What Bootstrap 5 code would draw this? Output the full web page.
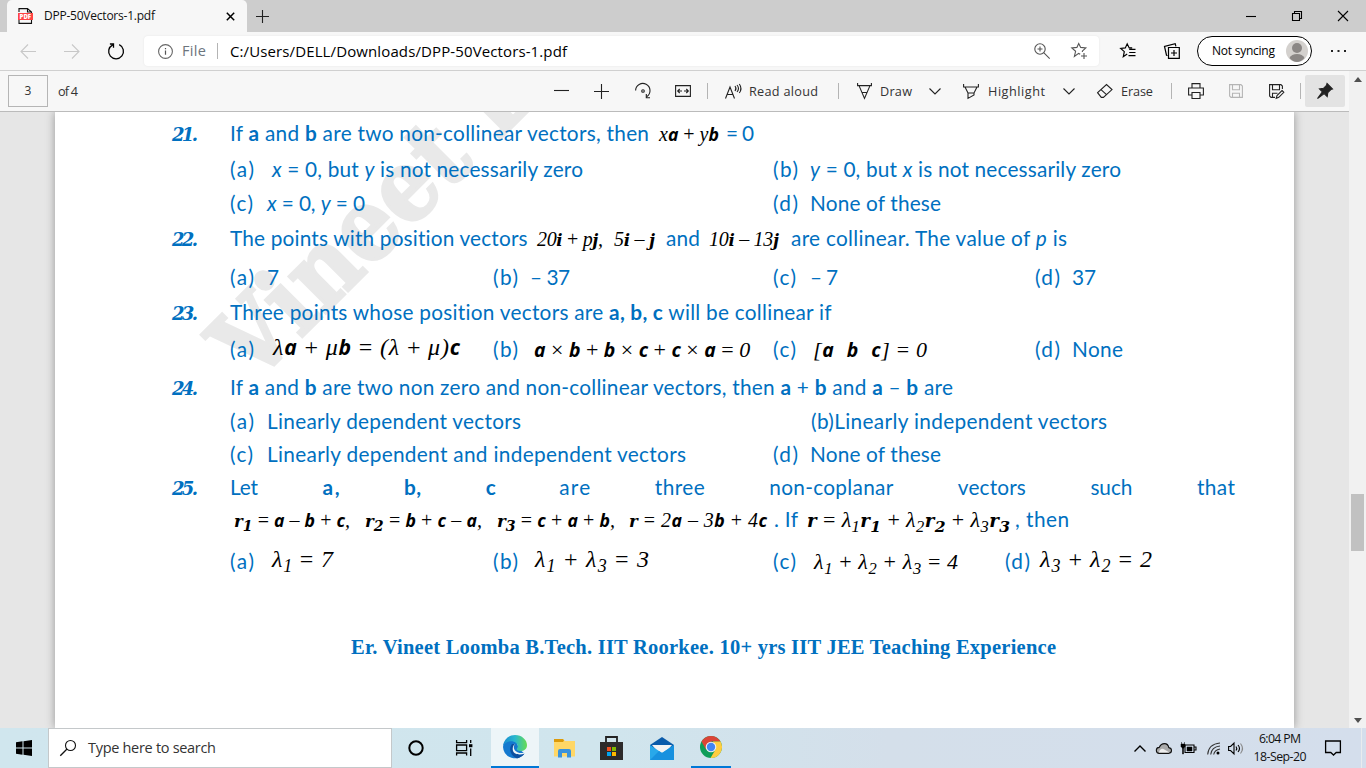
<!DOCTYPE html>
<html lang="en">
<head>
<meta charset="utf-8">
<title>DPP-50Vectors-1.pdf</title>
<meta name="viewport" content="width=device-width, initial-scale=1">
<link href="https://cdn.jsdelivr.net/npm/bootstrap@5.3.0/dist/css/bootstrap.min.css" rel="stylesheet">
<style>
html,body{height:768px;overflow:hidden}
body{font-family:"Open Sans","Noto Sans",sans-serif;font-size:12px;line-height:1;color:#111;background:#e6e6e6}
svg{display:block;flex:none;fill:none;stroke:#222;stroke-width:1.1;overflow:visible}
.cell{display:flex;align-items:center;justify-content:center;min-width:0}
.fit{display:inline-block;white-space:nowrap;flex:none}
.tabs-bar{height:32px;background:#cdcdcd;display:grid;grid-template-columns:7px 240px 31px 1fr 46px 46px 46px}
.doc-tab{background:#f7f7f7;border-radius:5px 5px 0 0;padding:0 8px 0 11px}
.addr-bar{height:39px;background:#f7f7f7;border-bottom:1px solid #d0d0d0;display:grid;grid-template-columns:6px 44px 44px 44px 6px 955px 7px 44px 44px 3px 115px 52px;align-items:center}
.addr-box{height:30px;background:#fff;border-radius:4px;box-shadow:0 0 2px #e3e3e3;font-size:15px;padding:0 11px 0 14px}
.file-tag{font-size:14.5px}
.star{margin-left:21px}
.sync-pill{height:30px;border:1.5px solid #000;border-radius:15px;padding:0 3px 0 14px}
.main-view{height:657px}
.pdf-bar{height:41px;background:#f7f7f7;border-bottom:1px solid #bbb;display:grid;grid-template-columns:8px 40px 10px 483px 40px 41px 41px 39px 11px 12px 107px 12px 13px 66px 24px 16px 94px 24px 16px 68px 12px 38px 42px 38px 10px 40px;align-items:center;color:#333}
.pdf-bar .fit{font-size:12.7px}
.page-no{height:32px;border:1px solid #b5b5b5}
.rule-v{width:1px;height:16px;background:#b4b4b4;justify-self:center}
.pin-btn{height:32px;background:#e3e3e3;border-radius:2px}
.scroll-col{width:17px;background:#f1f1f1;padding:6px 0 5px}
.thumb{width:13px;height:57px;background:#c1c1c1;margin-top:412px}
.pdf-view{height:616px;padding-left:55px;background:#e6e6e6}
.sheet{width:1239px;height:616px;background:#fff;box-shadow:0 0 9px rgba(0,0,0,.35);padding-top:3px;color:#0070c0;font:20.8px Lato,sans-serif;line-height:1;position:relative}
.watermark{position:absolute;left:0;top:0}
.line-row{display:flex;align-items:center;position:relative;padding-left:117px}
.qnum{width:58px;font:italic bold 18px "DejaVu Serif",serif;flex:none;transform:translateY(1px)}
.opts{display:grid;grid-template-columns:263px 280px 262px 1fr;padding-left:175px}
.opts>div{display:flex;align-items:center}
.lab{width:37px;flex:none}
.spread{width:1005px}
.h28{height:28px}.h30{height:30px}.h32{height:32px}.h36{height:36px}.h38{height:38px}.h40{height:40px}.h44{height:44px}.h56{height:56px}
.eq{color:#000;font-family:"Liberation Serif",serif;font-style:italic;font-size:20px;transform:translateY(1px)}
.eq.m{font-size:22px}
.eq.l{font-size:24px}
.eq b{font-family:"Open Sans",sans-serif;font-weight:700;font-size:.88em}
.eq b.s{font-family:"DejaVu Serif",serif;font-size:.83em}
.eq u{font-style:normal;text-decoration:none}
.eq sub{font-size:.75em;bottom:-.3em;line-height:0}
.eq b sub{font-size:.85em}
.eq.up{transform:translateY(-2px)}
.footer-line{height:56px;margin-top:30px;padding-left:296px;font:bold 20.5px "Liberation Serif",serif}
.task-bar{height:40px;background:linear-gradient(90deg,#d0e6ee 0,#d0e5ed 45%,#d4dfea 65%,#d4deec);display:grid;grid-template-columns:48px 344px 48px 48px 54px 44px 50px 51px 47px 1fr 24px 24px 24px 27px 18px 70px 36px 10px 5px}
.search-box{background:#fff;border:1px solid #c4c8ca;font-size:14.5px;color:#333;justify-content:flex-start;padding-left:11px}
.active-app{background:#edf5f8;border-bottom:2px solid #0078d7;width:48px;justify-self:center}
.open-app{border-bottom:2px solid #0078d7;width:40px;justify-self:center}
.clock-cell{font-size:12.3px;flex-direction:column;gap:6px;color:#111}
</style>
</head>
<body>
<header class="tabs-bar">
  <span></span>
  <div class="doc-tab d-flex align-items-center">
    <svg width="15" height="16" viewBox="0 0 15 16"><path d="M1 4V.6h8.5L13.5 4v11.4H1V12M9.5.6V4h4" stroke="#111"/><rect x="0" y="5" width="15" height="7" fill="#f44" stroke="none"/><text x="1.6" y="10.8" font-size="6" font-weight="800" fill="#fff" stroke="none">PDF</text></svg>
    <span class="fit" data-gap="11" data-w="111">DPP-50Vectors-1.pdf</span>
    <svg class="ms-auto me-1" width="9" height="9" viewBox="0 0 9 9"><path d="M.8.8l7.4 7.4M8.2.8L.8 8.2" stroke="#000" stroke-width="1.5"/></svg>
  </div>
  <div class="cell"><svg width="13" height="13" viewBox="0 0 13 13"><path d="M6.5 0v13M0 6.5h13"/></svg></div>
  <span></span>
  <div class="cell"><svg width="10" height="10" viewBox="0 0 10 10"><path d="M0 5.5h10" stroke="#000"/></svg></div>
  <div class="cell"><svg width="10" height="10" viewBox="0 0 10 10"><path d="M.5 2.5h7v7h-7zM2.5 2.5v-2h7v7h-2" stroke="#000"/></svg></div>
  <div class="cell"><svg width="10" height="10" viewBox="0 0 10 10"><path d="M0 0l10 10M10 0L0 10" stroke="#000"/></svg></div>
</header>
<nav class="addr-bar">
  <span></span>
  <div class="cell"><svg width="16" height="15" viewBox="0 0 16 15"><path d="M16 7.5H.8M8 .5l-7 7 7 7" stroke="#c8c8c8"/></svg></div>
  <div class="cell"><svg width="16" height="15" viewBox="0 0 16 15"><path d="M0 7.5h15.2M8 .5l7 7-7 7" stroke="#c8c8c8"/></svg></div>
  <div class="cell"><svg width="16" height="17" viewBox="0 0 16 17"><path d="M11.2 1.7A7.4 7.4 0 1 1 4.7 1.8M1.9 1h3.6v3.8" stroke="#000" stroke-width="1.3"/></svg></div>
  <span></span>
  <div class="addr-box d-flex align-items-center">
    <svg width="15" height="15" viewBox="0 0 15 15"><circle cx="7.5" cy="7.5" r="6.9" stroke="#666"/><path d="M7.5 6.5v4.3M7.5 4v1.3" stroke="#555" stroke-width="1.2"/></svg>
    <span class="fit file-tag text-secondary" data-gap="9" data-w="24">File</span>
    <span class="fit rule-v" data-gap="11" data-w="1"></span>
    <span class="fit text-black" data-gap="12" data-w="337">C:/Users/DELL/Downloads/DPP-50Vectors-1.pdf</span>
    <svg class="ms-auto" width="16" height="16" viewBox="0 0 16 16"><circle cx="6" cy="6" r="5.2" stroke="#555"/><path d="M9.7 9.7l6 6M6 3.5v5M3.5 6h5" stroke="#555"/></svg>
    <svg class="star" width="17" height="16" viewBox="0 0 17 16"><path d="M9.2 11.3L7.6 10.4l-4.2 3 1.2-5.1L.8 4.9l5.1-.5L7.7.5l2 3.9 5.1.5-3.5 3.2.2.9M13 10v6M10 13h6" stroke="#555"/></svg>
  </div>
  <span></span>
  <div class="cell"><svg width="16" height="16" viewBox="0 0 16 16"><path d="M7.2 11l-3.9 2.7 1-5.1L.7 5.4l4.6-.5L7.2.8l2 4.1h3M9.2 6.300h6.300M9.200 9.500h6.300M8.500 12.700h7" stroke="#000" stroke-width="1.2"/></svg></div>
  <div class="cell"><svg width="16" height="16" viewBox="0 0 16 16"><path d="M4.5 4.5h10.8v10.8H4.5zM10 7v6M7 10h6M3.5 12.5l-1-.3L.5 3.5 11.2.7l.7 2.6" stroke="#000" stroke-width="1.2"/></svg></div>
  <span></span>
  <div class="sync-pill d-flex align-items-center justify-content-between bg-white">
    <span class="fit text-black" data-w="63">Not syncing</span>
    <svg width="22" height="22" viewBox="0 0 22 22"><circle cx="11" cy="11" r="11" fill="#d4d1ce" stroke="none"/><circle cx="11" cy="8" r="5" fill="#8b8785" stroke="none"/><path d="M3.5 18q2-4 7.5-4t7.5 4Q15 22 11 22t-7.5-4z" fill="#8b8785" stroke="none"/></svg>
  </div>
  <div class="cell"><svg width="15" height="2" viewBox="0 0 15 2"><path d="M0 1h2M6.500 1h2M13 1h2" stroke-width="2"/></svg></div>
</nav>
<div class="main-view d-flex">
  <div class="flex-grow-1">
    <div class="pdf-bar">
      <span></span><div class="page-no cell">3</div><span></span>
      <div class="d-flex"><span class="fit" data-w="20">of 4</span></div>
      <div class="cell"><svg width="15" height="2"><path d="M0 .5h15"/></svg></div>
      <div class="cell"><svg width="15" height="15"><path d="M0 7.500h15M7.500 0v15"/></svg></div>
      <div class="cell"><svg width="16" height="16" viewBox="0 0 16 16"><path d="M.6 7.500A7.200 7.200 0 1 1 12 13.500M15 14.800h-3.700V11"/><circle cx="8" cy="8" r="1.300"/></svg></div>
      <div class="cell"><svg width="16" height="12" viewBox="0 0 16 12"><path d="M.6.6h14.800v10.800H.6zM3 6h4M9 6h4M4.700 4L2.700 6l2 2M11.300 4l2 2-2 2"/></svg></div>
      <span class="rule-v"></span><span></span>
      <div class="d-flex align-items-center"><svg width="17" height="15" viewBox="0 0 17 15"><path d="M.5 14.500L5 3l4.500 11.500M2 10.500h6M10 2q2 2.500 0 5M12 1q3 3.500 0 7M14.300 0q3.300 4.500 0 9"/></svg><span class="fit" data-gap="7" data-w="69">Read aloud</span></div>
      <span class="rule-v"></span><span></span>
      <div class="d-flex align-items-center"><svg width="15" height="16" viewBox="0 0 15 16"><path d="M.6 0v2.600h13.800V0M2 2.600l5.500 12.800L13 2.600M4.800 9.500h5.400"/></svg><span class="fit" data-gap="8" data-w="32">Draw</span></div>
      <div class="cell"><svg width="12" height="7" viewBox="0 0 12 7"><path d="M.5.500L6 6l5.500-5.500"/></svg></div>
      <span></span>
      <div class="d-flex align-items-center"><svg width="16" height="15" viewBox="0 0 16 15"><path d="M.6 0v3h14.800V0M2 3l3 6h6l3-6M5 9v5.400L11 11V9"/></svg><span class="fit" data-gap="9" data-w="57">Highlight</span></div>
      <div class="cell"><svg width="12" height="7" viewBox="0 0 12 7"><path d="M.5.500L6 6l5.500-5.500"/></svg></div>
      <span></span>
      <div class="d-flex align-items-center"><svg width="16" height="14" viewBox="0 0 16 14"><path d="M.6 8.700L9.500.6l5.500 5-8.600 7.800H4.300zM4 5.700l5.500 5"/></svg><span class="fit" data-gap="8" data-w="32">Erase</span></div>
      <span class="rule-v"></span>
      <div class="cell"><svg width="16" height="16" viewBox="0 0 16 16"><path d="M4 5V.6h8V5M4 12H.6V5h14.800v7H12M4 9.500h8v6H4z"/></svg></div>
      <div class="cell"><svg width="14" height="14" viewBox="0 0 14 14"><path d="M.6.6h11.300l1.500 1.500v11.300H2L.6 12zM3.500.6v5.200h7V.6M3.500 13.400V9.200h7v4.200" stroke="#b5b5b5"/></svg></div>
      <div class="cell"><svg width="15" height="15" viewBox="0 0 15 15"><path d="M6 13.400H2L.6 12V.6h11.300l1.500 1.500v3M3.500.6v5.200h7V.6M3.500 13.400V9.200h5M13 6.500l1.800 1.800-5 5-2.600 1 .8-2.800z"/></svg></div>
      <span class="rule-v"></span>
      <div class="pin-btn cell"><svg width="16" height="16" viewBox="0 0 16 16"><path d="M10 .5L15.500 6l-1.700.6-3 3-.6 4-3-3L.5 15.500 5.400 8.800 2.500 5.900l4-.6 3-3z" fill="#222"/></svg></div>
    </div>
    <div class="pdf-view overflow-hidden">
      <main class="sheet">
        <svg class="watermark" width="1239" height="300"><defs><clipPath id="paper"><rect width="1239" height="400"/></clipPath></defs><g clip-path="url(#paper)"><text transform="translate(198,274) rotate(-45)" font-family="DejaVu Serif" font-weight="700" font-size="100" fill="#e9e9e9" stroke="#e9e9e9" stroke-width="3" textLength="735" lengthAdjust="spacingAndGlyphs">Vineet Loomba</text></g></svg>
        <div class="line-row h36"><span class="qnum"><span class="fit" data-w="26">21.</span></span><span class="fit" data-w="419">If <b>a</b> and <b>b</b> are two non-collinear vectors, then</span><span class="fit eq" data-gap="10" data-w="60">x<b>a</b> <u>+</u> y<b>b</b></span><span class="fit" data-gap="7" data-w="28">= 0</span></div>
        <div class="line-row opts h36"><div><span class="lab"><span class="fit" data-w="24">(a)</span></span><span class="fit" data-gap="5" data-w="311"><i>x</i> = 0, but <i>y</i> is not necessarily zero</span></div><div></div><div><span class="lab"><span class="fit" data-w="25">(b)</span></span><span class="fit" data-w="311"><i>y</i> = 0, but <i>x</i> is not necessarily zero</span></div></div>
        <div class="line-row opts h32"><div><span class="lab"><span class="fit" data-w="23">(c)</span></span><span class="fit" data-w="98"><i>x</i> = 0, <i>y</i> = 0</span></div><div></div><div><span class="lab"><span class="fit" data-w="25">(d)</span></span><span class="fit" data-w="131">None of these</span></div></div>
        <div class="line-row h38"><span class="qnum"><span class="fit" data-w="26">22.</span></span><span class="fit" data-w="298">The points with position vectors</span><span class="fit eq" data-gap="9" data-w="66">20<b class="s">i</b> <u>+</u> p<b class="s">j</b>,</span><span class="fit eq" data-gap="11" data-w="41">5<b class="s">i</b> <u>–</u> <b class="s">j</b></span><span class="fit" data-gap="11" data-w="34">and</span><span class="fit eq" data-gap="9" data-w="70">10<b class="s">i</b> <u>–</u> 13<b class="s">j</b></span><span class="fit" data-gap="12" data-w="276">are collinear. The value of <i>p</i> is</span></div>
        <div class="line-row opts h40"><div><span class="lab"><span class="fit" data-w="24">(a)</span></span><span>7</span></div><div><span class="lab"><span class="fit" data-w="25">(b)</span></span><span class="fit" data-w="40">– 37</span></div><div><span class="lab"><span class="fit" data-w="23">(c)</span></span><span class="fit" data-w="28">– 7</span></div><div><span class="lab"><span class="fit" data-w="25">(d)</span></span><span class="fit" data-w="24">37</span></div></div>
        <div class="line-row h30"><span class="qnum"><span class="fit" data-w="26">23.</span></span><span class="fit" data-w="602">Three points whose position vectors are <b>a, b, c</b> will be collinear if</span></div>
        <div class="line-row opts h44"><div><span class="lab"><span class="fit" data-w="24">(a)</span></span><span class="fit eq l up" data-gap="6" data-w="187">λ<b>a</b> <u>+</u> μ<b>b</b> <u>=</u> (λ <u>+</u> μ)<b>c</b></span></div><div><span class="lab"><span class="fit" data-w="25">(b)</span></span><span class="fit eq m" data-gap="4" data-w="216"><b>a</b> <u>×</u> <b>b</b> <u>+</u> <b>b</b> <u>×</u> <b>c</b> <u>+</u> <b>c</b> <u>×</u> <b>a</b> <u>=</u> 0</span></div><div><span class="lab"><span class="fit" data-w="23">(c)</span></span><span class="fit eq m" data-gap="3" data-w="114">[<b>a</b> &nbsp;<b>b</b> &nbsp;<b>c</b>] <u>=</u> 0</span></div><div><span class="lab"><span class="fit" data-w="25">(d)</span></span><span class="fit" data-w="51">None</span></div></div>
        <div class="line-row h32"><span class="qnum"><span class="fit" data-w="26">24.</span></span><span class="fit" data-w="723">If <b>a</b> and <b>b</b> are two non zero and non-collinear vectors, then <b>a</b> + <b>b</b> and <b>a</b> – <b>b</b> are</span></div>
        <div class="line-row opts h36"><div><span class="lab"><span class="fit" data-w="24">(a)</span></span><span class="fit" data-w="254">Linearly dependent vectors</span></div><div></div><div><span class="fit" data-gap="38" data-w="296">(b)Linearly independent vectors</span></div></div>
        <div class="line-row opts h30"><div><span class="lab"><span class="fit" data-w="23">(c)</span></span><span class="fit" data-w="419">Linearly dependent and independent vectors</span></div><div></div><div><span class="lab"><span class="fit" data-w="25">(d)</span></span><span class="fit" data-w="131">None of these</span></div></div>
        <div class="line-row h36"><span class="qnum"><span class="fit" data-w="26">25.</span></span><div class="spread d-flex justify-content-between"><span class="fit" data-w="28">Let</span><b class="fit" data-w="17">a,</b><b class="fit" data-w="17">b,</b><b class="fit" data-w="9">c</b><span class="fit" data-w="31">are</span><span class="fit" data-w="50">three</span><span class="fit" data-w="124">non-coplanar</span><span class="fit" data-w="68">vectors</span><span class="fit" data-w="42">such</span><span class="fit" data-w="38">that</span></div></div>
        <div class="line-row h28"><span class="fit eq" data-gap="62" data-w="116"><b class="s">r<sub>1</sub></b> <u>=</u> <b>a</b> <u>–</u> <b>b</b> <u>+</u> <b>c</b>,</span><span class="fit eq" data-gap="15" data-w="117"><b class="s">r<sub>2</sub></b> <u>=</u> <b>b</b> <u>+</u> <b>c</b> <u>–</u> <b>a</b>,</span><span class="fit eq" data-gap="15" data-w="118"><b class="s">r<sub>3</sub></b> <u>=</u> <b>c</b> <u>+</u> <b>a</b> <u>+</u> <b>b</b>,</span><span class="fit eq" data-gap="14" data-w="138"><b class="s">r</b> <u>=</u> 2<b>a</b> <u>–</u> 3<b>b</b> <u>+</u> 4<b>c</b></span><span class="fit" data-gap="7" data-w="24">. If</span><span class="fit eq m" data-gap="9" data-w="203"><b class="s">r</b> <u>=</u> λ<sub>1</sub><b class="s">r<sub>1</sub></b> <u>+</u> λ<sub>2</sub><b class="s">r<sub>2</sub></b> <u>+</u> λ<sub>3</sub><b class="s">r<sub>3</sub></b></span><span class="fit" data-gap="5" data-w="54">, then</span></div>
        <div class="line-row opts h56"><div><span class="lab"><span class="fit" data-w="24">(a)</span></span><span class="fit eq l up" data-gap="5" data-w="61">λ<sub>1</sub> <u>=</u> 7</span></div><div><span class="lab"><span class="fit" data-w="25">(b)</span></span><span class="fit eq l up" data-gap="5" data-w="114">λ<sub>1</sub> <u>+</u> λ<sub>3</sub> <u>=</u> 3</span></div><div><span class="lab"><span class="fit" data-w="23">(c)</span></span><span class="fit eq m" data-gap="4" data-w="144">λ<sub>1</sub> <u>+</u> λ<sub>2</sub> <u>+</u> λ<sub>3</sub> <u>=</u> 4</span></div><div><span class="fit" data-gap="-30" data-w="25">(d)</span><span class="fit eq l up" data-gap="10" data-w="112">λ<sub>3</sub> <u>+</u> λ<sub>2</sub> <u>=</u> 2</span></div></div>
        <div class="footer-line d-flex align-items-center"><span class="fit" data-w="705">Er. Vineet Loomba B.Tech. IIT Roorkee. 10+ yrs IIT JEE Teaching Experience</span></div>
      </main>
    </div>
  </div>
  <aside class="scroll-col d-flex flex-column align-items-center">
    <svg width="8" height="5"><path d="M0 5l4-5 4 5z" fill="#505050" stroke="none"/></svg>
    <span class="thumb"></span>
    <svg class="mt-auto" width="8" height="5"><path d="M0 0l4 5 4-5z" fill="#505050" stroke="none"/></svg>
  </aside>
</div>
<footer class="task-bar">
  <div class="cell"><svg width="16" height="16" viewBox="0 0 16 16"><path d="M0 2.200L6.500 1.300v6.200H0zM7.500 1.200L16 0v7.500H7.500zM0 8.500h6.500v6.200L0 13.800zM7.500 8.500H16V16l-8.500-1.200z" fill="#000" stroke="none"/></svg></div>
  <div class="search-box cell"><svg width="16" height="16" viewBox="0 0 16 16"><circle cx="10.500" cy="5.500" r="5" stroke="#111"/><path d="M7 9L.3 15.700" stroke="#111" stroke-width="1.300"/></svg><span class="fit" data-gap="12" data-w="128">Type here to search</span></div>
  <div class="cell"><svg width="16" height="16"><circle cx="8" cy="8" r="6.700" stroke="#000" stroke-width="2"/></svg></div>
  <div class="cell"><svg width="16" height="16" viewBox="0 0 16 16"><path d="M.6 0v2.600h10V0M.6 15.500V13h10v2.500M.6 5h10v5.600H.6zM14.700 0v3M14.700 8.500V16" stroke="#000" stroke-width="1.300"/><path d="M13 4.200h3.400v3H13z" fill="#000" stroke="none"/></svg></div>
  <div class="cell active-app"><svg width="24" height="24" viewBox="0 0 24 24"><defs><linearGradient id="eg" x1="0" x2="1"><stop stop-color="#1789d0"/><stop offset=".5" stop-color="#29b8cf"/><stop offset="1" stop-color="#67dc51"/></linearGradient></defs><g stroke="none"><path d="M0 12a12 12 0 0 0 21.500 6.500L16 14 12 2Q0 4 0 12z" fill="#1479cf"/><path d="M0 11C1 4 6 0 12 0c7 0 12 5 12 10 0 4-3 6-6.500 6-3 0-4.500-1-3.500-2.500C17 9 11 5 6 6.500 3 7.500 1 9 0 11z" fill="url(#eg)"/><path d="M9 9c-4 5-1 12 5 14.500 3-.7 6-2.700 7.500-5-5 2-11 0-11-5 0-2 1-3.500 2-4.500z" fill="#0c4fa0"/><path d="M12.500 8.800c-3 2.500-2 8 4 9.200 2.500.4 4.500-.3 6-1l-.8 1.500c-5 2-12 1-12-4.500 0-2.500 1-4.500 2.800-5.200z" fill="#edf5f8"/></g></svg></div>
  <div class="cell"><svg width="21" height="19" viewBox="0 0 21 19"><g stroke="none"><path d="M0 0h9l2 2h10v15.500H0z" fill="#ffd766"/><path d="M0 0h9l1 1.500L9 3H0z" fill="#dc9a0a"/><path d="M4 18.500V12q0-2 2-2h9q2 0 2 2v6.500h-4V14H8v4.500z" fill="#3a93dc"/></g></svg></div>
  <div class="cell"><svg width="23" height="24" viewBox="0 0 23 24"><path d="M6 6V1h11v5" stroke="#222" stroke-width="1.800"/><path d="M0 6h23v18H0z" fill="#2d2b2b" stroke="none"/><g stroke="none"><path d="M7 11h4v4H7z" fill="#f25022"/><path d="M12 11h4v4h-4z" fill="#7fba00"/><path d="M7 16h4v4H7z" fill="#00a4ef"/><path d="M12 16h4v4h-4z" fill="#ffb900"/></g></svg></div>
  <div class="cell"><svg width="24" height="23" viewBox="0 0 24 23"><g stroke="none"><path d="M0 8l12-8 12 8v4H0z" fill="#0a5baa"/><path d="M2 8h20l-6 7H8z" fill="#f3f3f3"/><path d="M0 8l12 8L24 8v15H0z" fill="#28a8ea"/><path d="M0 23l9-9 3 2 12-8v15z" fill="#1791df"/></g></svg></div>
  <div class="cell open-app"><svg width="22" height="22" viewBox="0 0 22 22"><g stroke="none"><circle cx="11" cy="11" r="11" fill="#0f9d58"/><path d="M1.500 5.500a11 11 0 0 1 19 0H11l-5 8z" fill="#db4437"/><path d="M20.500 5.500A11 11 0 0 1 10.500 22l5-8.500L13 5.500z" fill="#ffcd40"/><circle cx="11" cy="11" r="5.300" fill="#f1f1f1"/><circle cx="11" cy="11" r="4.200" fill="#4285f4"/></g></svg></div>
  <span></span>
  <div class="cell"><svg width="12" height="7"><path d="M.5 6.500L6 1l5.500 5.500" stroke="#000" stroke-width="1.400"/></svg></div>
  <div class="cell"><svg width="16" height="11" viewBox="0 0 16 11"><path d="M3.500 10.400a3 3 0 0 1-.3-6Q5 .6 8.500.6t4.300 4q2.700.4 2.700 3t-3 2.800z" fill="#aaa" stroke="#111"/><path d="M3 9.500Q4 5 7.500 6l6 3.500z" fill="#eee" stroke="none"/></svg></div>
  <div class="cell"><svg width="16" height="12" viewBox="0 0 16 12"><path d="M5 3h9v7.500H5zM14.500 5H16v3h-1.500" stroke="#000"/><path d="M7 5h5v4H7zM1 2h4v3H4v1H2V5H1zM1.500 0v2M4.500 0v2M2.500 6h1v6h-1z" fill="#000" stroke="#000" stroke-width=".5"/></svg></div>
  <div class="cell"><svg width="13" height="13" viewBox="0 0 13 13"><path d="M.7 12.500Q1.500 2 13 1M3.700 12.500Q4.500 5 13 4M6.700 12.500Q7.500 8 13 7" stroke="#333"/><circle cx="11" cy="11" r="1.500" fill="#000" stroke="none"/></svg></div>
  <div class="cell"><svg width="16" height="13" viewBox="0 0 16 13"><path d="M.6 4.500h2L6 1v11L2.600 8.500h-2zM8 4.500q1.500 2 0 4M10 3q3 3.500 0 7" stroke="#000"/><path d="M12.500 1.500q4 5 0 10" stroke="#888"/></svg></div>
  <div class="cell clock-cell"><span class="fit" data-w="42">6:04 PM</span><span class="fit" data-w="53">18-Sep-20</span></div>
  <div class="cell"><svg width="16" height="16" viewBox="0 0 16 16"><path d="M.6 1h14.800v11.500h-4.200L8.500 15l-2.700-2.500H.6z" stroke="#000" stroke-width="1.300"/></svg></div>
  <span></span><span class="border-start border-secondary-subtle"></span>
</footer>
<script src="https://cdn.jsdelivr.net/npm/bootstrap@5.3.0/dist/js/bootstrap.bundle.min.js"></script>
<script>
// Track every text run so that it fills its measure.
document.querySelectorAll('.fit').forEach(function (el) {
  var w = +el.dataset.w, n = el.textContent.length;
  var natural = el.getBoundingClientRect().width;
  if (n > 1) el.style.letterSpacing = ((w - natural) / (n - 1)).toFixed(3) + 'px';
  el.style.width = w + 'px';
  if (el.dataset.gap) el.style.marginLeft = el.dataset.gap + 'px';
});
</script>
</body>
</html>
